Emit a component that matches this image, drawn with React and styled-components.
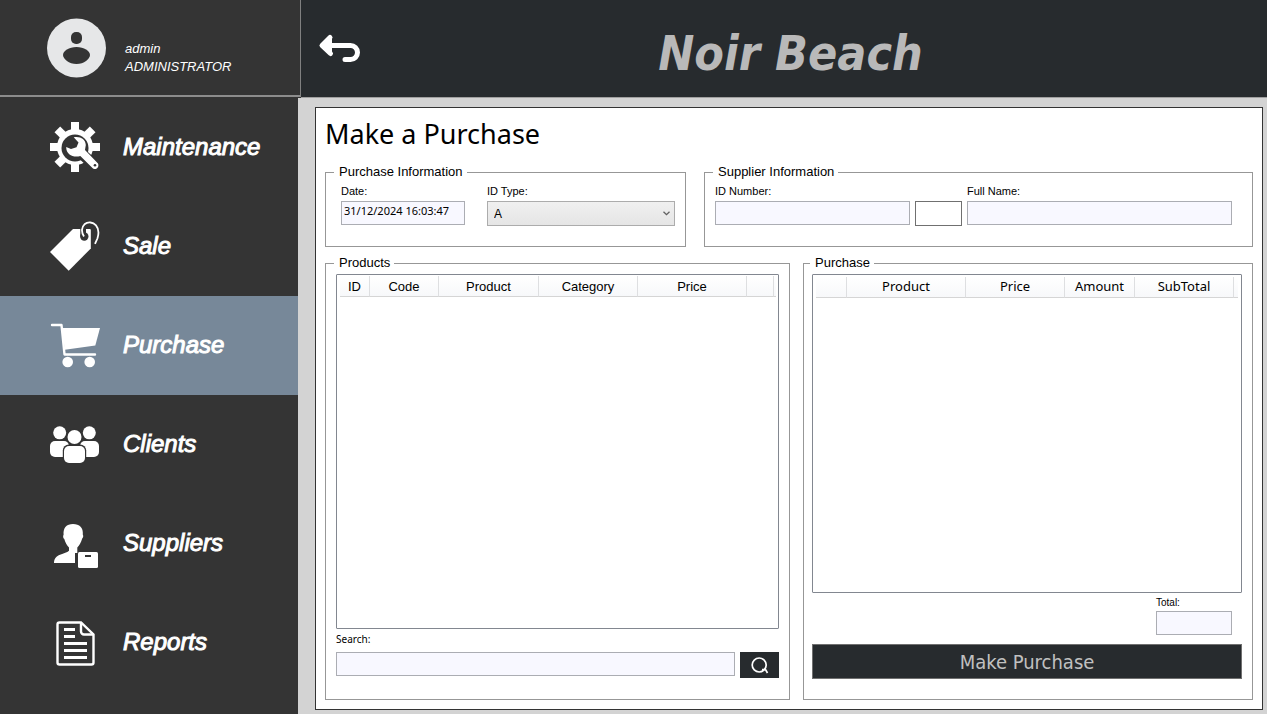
import React from "react";
import styled, { createGlobalStyle } from "styled-components";

const GlobalStyle = createGlobalStyle`
  *, *::before, *::after { box-sizing: border-box; }
  body {
    margin: 0;
    background: #d3d3d3;
    color: #000;
    font-family: "Liberation Sans", Arial, sans-serif;
    font-size: 13px;
  }
  button, input, select { font: inherit; color: inherit; margin: 0; }
`;

const humanist = `"Noto Sans", "Segoe UI", sans-serif`;
const condensed = `"DejaVu Sans Condensed", Tahoma, sans-serif`;

const Page = styled.div`
  min-height: 100vh;
  display: flex;
  flex-direction: column;
`;

const TopBar = styled.header`
  display: flex;
  height: 98px;
  background: #343434;
`;

const UserPanel = styled.div`
  width: 301px;
  height: 97px;
  padding: 0 0 0 46px;
  display: flex;
  align-items: center;
  gap: 19px;
  color: #fff;
  border-right: 1px solid #808080;
  border-bottom: 2px solid #8c8c8c;
`;

const UserText = styled.div`
  padding-top: 21px;
  font-style: italic;
  font-size: 13px;
  line-height: 18px;
`;

const Banner = styled.div`
  flex: 1;
  display: flex;
  align-items: center;
  padding: 0 48px 0 17px;
  background: #272b2e;
  border-bottom: 1px solid #a0a0a0;
`;

const BackButton = styled.button`
  width: 44px;
  height: 34px;
  padding: 0;
  border: 0;
  background: none;
  svg { display: block; }
`;

const Brand = styled.div`
  flex: 1;
  padding-top: 8px;
  text-align: center;
  color: #b9b9b9;
  font-family: ${condensed};
  font-size: 48px;
  line-height: 56px;
  font-weight: bold;
  font-style: italic;
`;

const Body = styled.div`
  flex: 1;
  display: grid;
  grid-template-columns: 298px minmax(0, 1fr);
`;

const Sidebar = styled.nav`
  background: #343434;
`;

const NavLink = styled.a`
  display: flex;
  align-items: center;
  gap: 23px;
  height: 99px;
  padding: 0 0 0 50px;
  color: #fff;
  text-decoration: none;
  font-size: 24px;
  font-style: italic;
  line-height: 28px;
  -webkit-text-stroke: 1px #fff;
  background: ${(p) => (p.$active ? "#778899" : "transparent")};
  svg { flex: none; color: ${(p) => (p.$active ? "#778899" : "#343434")}; }
  span { padding-bottom: 1px; }
`;

const Main = styled.main`
  display: flex;
  padding: 9px 4px 4px 17px;
`;

const Card = styled.section`
  flex: 1;
  display: flex;
  flex-direction: column;
  min-width: 0;
  padding: 8px 9px 9px 9px;
  background: #fff;
  border: 1px solid #333;
`;

const Title = styled.h1`
  margin: 0 0 12px;
  font-family: ${humanist};
  font-size: 27px;
  font-weight: normal;
  line-height: 36px;
`;

const Columns = styled.div`
  display: grid;
  grid-template-columns: ${(p) => p.$columns};
  gap: ${(p) => p.$gap};
  ${(p) => p.$fill && "flex: 1;"}
  & + & { margin-top: 8px; }
`;

const Group = styled.fieldset`
  display: flex;
  flex-direction: column;
  min-width: 0;
  min-height: 83px;
  margin: 0;
  padding: 3px 10px ${(p) => p.$bottom || "20px"} ${(p) => p.$left || "10px"};
  border: 1px solid #979797;
`;

const Legend = styled.legend`
  margin-left: -2px;
  padding: 0 4px 0 5px;
  font-size: 13px;
  line-height: 16px;
`;

const FieldRow = styled.div`
  display: grid;
  grid-template-columns: ${(p) => p.$columns};
  column-gap: ${(p) => p.$gap};
  align-items: start;
  padding: ${(p) => p.$pad || "0"};
`;

const Field = styled.div`
  display: flex;
  flex-direction: column;
  gap: 2px;
  min-width: 0;
`;

const Label = styled.label`
  font-size: 11px;
  line-height: 16px;
`;

const SmallLabel = styled(Label)`
  font-family: ${(p) => (p.$humanist ? humanist : "inherit")};
  font-size: 10px;
`;

const TextBox = styled.input`
  width: 100%;
  min-width: 0;
  height: 24px;
  padding: 0 3px 6px 2px;
  border: 1px solid #abadb3;
  border-radius: 0;
  background: #f8f8ff;
  font-family: ${humanist};
  font-size: 11px;
`;

const SelectWrap = styled.div`
  position: relative;
  svg { position: absolute; right: 5px; top: 10px; pointer-events: none; }
`;

const Select = styled.select`
  display: block;
  width: 100%;
  height: 25px;
  padding: 0 20px 0 6px;
  appearance: none;
  border: 1px solid #acacac;
  border-radius: 0;
  background: linear-gradient(#f0f0f0, #e5e5e5);
  font-size: 12px;
`;

const PlainButton = styled.button`
  align-self: end;
  height: 25px;
  margin-bottom: -1px;
  padding: 0;
  border: 1px solid #707070;
  background: #fff;
`;

const SearchField = styled.div`
  display: flex;
  flex-direction: column;
  margin-top: 2px;
`;

const SearchRow = styled.div`
  display: flex;
  gap: 5px;
  margin-top: 5px;
`;

const SearchButton = styled.button`
  flex: none;
  width: 39px;
  height: 26px;
  padding: 0;
  display: grid;
  place-items: center;
  border: 0;
  background: #272b2e;
`;

const TableBox = styled.div`
  flex: 1;
  padding: ${(p) => p.$pad};
  border: 1px solid #828790;
  border-radius: 1px;
  overflow: hidden;
`;

const Table = styled.table`
  width: 100%;
  table-layout: fixed;
  border-collapse: separate;
  border-spacing: 0;
  th {
    height: 21px;
    padding: ${(p) => (p.$humanist ? "0 0 2px" : "2px 0 0")};
    font-family: ${(p) => (p.$humanist ? humanist : "inherit")};
    font-size: 13px;
    font-weight: normal;
    line-height: 18px;
    white-space: nowrap;
    text-align: center;
    border-right: 1px solid #dedfe1;
    border-bottom: 1px solid #d5d5d5;
    background: linear-gradient(#fff, #f7f8fa);
  }
  th:last-child { border-right: 0; }
`;

const TotalField = styled.div`
  display: flex;
  flex-direction: column;
  align-self: flex-end;
  width: 76px;
  margin: 2px 10px 9px 0;
`;

const SubmitButton = styled.button`
  height: 35px;
  padding: 0;
  border: 1px solid #707070;
  background: #272b2e;
  color: #c0c0c0;
  font-family: ${condensed};
  font-size: 20px;
`;

const Icon = ({ children }) => (
  <svg width="50" height="51" viewBox="0 0 50 51" fill="#fff" aria-hidden="true">
    {children}
  </svg>
);

const MaintenanceIcon = () => (
  <Icon>
    <circle cx="25" cy="25" r="18" />
    {[0, 45, 90, 135, 180, 225, 270, 315].map((a) => (
      <path key={a} d="M21 0h8v9h-8z" transform={`rotate(${a} 25 25)`} />
    ))}
    <circle cx="25" cy="26" r="13.500" fill="currentColor" />
    <path d="M31 31 45 44" stroke="currentColor" strokeWidth="11" strokeLinecap="round" />
    <path d="M23.700 15.300C30 14 35.500 17 35.800 23L35 28 48 41.500C49.500 45 46.500 48.500 43 46.500L30.300 34C24 36 16 33 16.200 25L21 27l5.500-1.700 2-4.800z" />
    <circle cx="45" cy="43.300" r="1.300" fill="currentColor" />
  </Icon>
);

const SaleIcon = () => (
  <Icon>
    <path d="M0 31 18.700 49.700 40.800 27.500V9a1 1 0 0 0-1-1H23z" />
    <circle cx="34.300" cy="15.500" r="4.200" fill="currentColor" />
    <path d="M30.300 7h5.700v8h-5.700z" fill="currentColor" />
    <path d="M34 15.500C31 11 31.500 6 34.500 3.300 38 .500 43 1 46 4.300c2.500 3 3 8 1.500 13l-2.500 5.500" fill="none" stroke="#fff" strokeWidth="1.800" />
  </Icon>
);

const PurchaseIcon = () => (
  <Icon>
    <path d="M2 5h9.500l3 29.500H45" fill="none" stroke="#fff" strokeWidth="2.400" strokeLinejoin="round" strokeLinecap="round" />
    <path d="M12 8h38l-4.700 17.500-30.500 4.300z" />
    <circle cx="17.700" cy="42" r="5.300" />
    <circle cx="39.700" cy="42" r="5.300" />
  </Icon>
);

const ClientsIcon = () => (
  <Icon>
    <circle cx="9.700" cy="13.800" r="6.500" />
    <circle cx="39.300" cy="13.800" r="6.500" />
    <rect x="0" y="22" width="19" height="16" rx="5" />
    <rect x="30" y="22" width="19" height="16" rx="5" />
    <circle cx="24.500" cy="18" r="8.300" fill="currentColor" />
    <rect x="12.800" y="25.500" width="23.400" height="20" rx="6" fill="currentColor" />
    <circle cx="24.500" cy="18" r="7" />
    <rect x="14" y="27" width="21" height="17" rx="5" />
  </Icon>
);

const SuppliersIcon = () => (
  <Icon>
    <path d="M23 6c6.500 0 10.500 4 9.800 10.500.9 1.500.3 3.200-.600 4-1.200 4.500-3.200 7-4.900 9v5.500H25V45H4c0-4.500 2.500-7 6-8.300 4-1.500 7-2.200 9-4v-3.200c-2.200-2.200-3.700-4.800-4.700-8.500-1.300-1-1.500-3-.7-4.300C13 10 16.500 6 23 6z" />
    <rect x="28" y="34" width="20" height="16" rx="1.500" />
    <path d="M35 37h6v2h-6z" fill="currentColor" />
  </Icon>
);

const ReportsIcon = () => (
  <Icon>
    <path d="M9.500 5.500H31L43.500 17.500v28a2 2 0 0 1-2 2h-32a2 2 0 0 1-2-2v-38a2 2 0 0 1 2-2z" fill="none" stroke="#fff" strokeWidth="2.400" />
    <path d="M31 5.500v9a3 3 0 0 0 3 3h9.500" fill="none" stroke="#fff" strokeWidth="2.400" />
    <path d="M14 12.500h11M14 19.500h11M14 26.500h23M14 33.500h23M14 40.500h23" stroke="#fff" strokeWidth="3" />
  </Icon>
);

const AvatarIcon = () => (
  <svg width="60" height="60" viewBox="0 0 60 60" aria-hidden="true">
    <circle cx="30.500" cy="30" r="29.500" fill="#e6e7e8" />
    <rect x="25" y="14" width="11" height="12" rx="5" fill="#343434" />
    <path d="M17 37c0-4 6-8 13.500-8S44 33 44 37s-6 9-13.500 9S17 41 17 37z" fill="#343434" />
  </svg>
);

const BackIcon = () => (
  <svg width="44" height="34" viewBox="0 0 44 34" fill="none" stroke="#fff" strokeWidth="5" strokeLinecap="round" strokeLinejoin="round" aria-hidden="true">
    <path d="M13 5 4 13.500l9 8z" fill="#fff" strokeWidth="2" />
    <path d="M12 5.500 4 13.500l8.500 8M6 13.500h26.500a7 7 0 0 1 0 14H27" />
  </svg>
);

const SearchIcon = () => (
  <svg width="20" height="20" viewBox="0 0 20 20" fill="none" stroke="#fff" strokeWidth="1.700" aria-hidden="true">
    <circle cx="9.200" cy="10" r="7" />
    <path d="M12 14.500h3.500l2 3.500" />
  </svg>
);

const navItems = [
  { name: "Maintenance", Glyph: MaintenanceIcon },
  { name: "Sale", Glyph: SaleIcon },
  { name: "Purchase", Glyph: PurchaseIcon, active: true },
  { name: "Clients", Glyph: ClientsIcon },
  { name: "Suppliers", Glyph: SuppliersIcon },
  { name: "Reports", Glyph: ReportsIcon },
];

const productColumns = [
  ["ID", 30], ["Code", 69], ["Product", 100], ["Category", 99], ["Price", 109], ["", 27], ["", 2],
];
const purchaseColumns = [
  ["", 31], ["Product", 119], ["Price", 99], ["Amount", 70], ["SubTotal", 99], ["", 4],
];

const HeaderTable = ({ columns, label, humanist: isHumanist }) => {
  const total = columns.reduce((sum, [, w]) => sum + w, 0);
  return (
    <Table $humanist={isHumanist} aria-label={label}>
      <colgroup>
        {columns.map(([, w], i) => (
          <col key={i} style={{ width: `${(w / total) * 100}%` }} />
        ))}
      </colgroup>
      <thead>
        <tr>
          {columns.map(([name], i) => (
            <th key={i} scope="col">{name}</th>
          ))}
        </tr>
      </thead>
    </Table>
  );
};

export default function App() {
  return (
    <>
      <GlobalStyle />
      <Page>
        <TopBar>
          <UserPanel>
            <AvatarIcon />
            <UserText>
              <div>admin</div>
              <div>ADMINISTRATOR</div>
            </UserText>
          </UserPanel>
          <Banner>
            <BackButton type="button" aria-label="Back"><BackIcon /></BackButton>
            <Brand>Noir Beach</Brand>
          </Banner>
        </TopBar>
        <Body>
          <Sidebar>
            {navItems.map(({ name, Glyph, active }) => (
              <NavLink key={name} href="#" $active={active} aria-current={active ? "page" : undefined}>
                <Glyph />
                <span>{name}</span>
              </NavLink>
            ))}
          </Sidebar>
          <Main>
            <Card>
              <Title>Make a Purchase</Title>
              <Columns $columns="minmax(0, 361fr) minmax(0, 549fr)" $gap="18px">
                <Group>
                  <Legend>Purchase Information</Legend>
                  <FieldRow $columns="124fr 188fr" $gap="22px" $pad="0 0 0 5px">
                    <Field>
                      <Label htmlFor="date">Date:</Label>
                      <TextBox id="date" defaultValue="31/12/2024 16:03:47" />
                    </Field>
                    <Field>
                      <Label htmlFor="id-type">ID Type:</Label>
                      <SelectWrap>
                        <Select id="id-type" defaultValue="A">
                          <option>A</option>
                        </Select>
                        <svg width="7" height="5" viewBox="0 0 7 5" fill="none" stroke="#606060" strokeWidth="1.300" aria-hidden="true">
                          <path d="M.5.700 3.500 3.700 6.500.700" />
                        </svg>
                      </SelectWrap>
                    </Field>
                  </FieldRow>
                </Group>
                <Group>
                  <Legend>Supplier Information</Legend>
                  <FieldRow $columns="195fr 47px 265fr" $gap="5px" $pad="0 10px 0 0">
                    <Field>
                      <Label htmlFor="id-number">ID Number:</Label>
                      <TextBox id="id-number" />
                    </Field>
                    <PlainButton type="button" aria-label="Find supplier" />
                    <Field>
                      <Label htmlFor="full-name">Full Name:</Label>
                      <TextBox id="full-name" />
                    </Field>
                  </FieldRow>
                </Group>
              </Columns>
              <Columns $columns="minmax(0, 465fr) minmax(0, 450fr)" $gap="13px" $fill>
                <Group $bottom="21px">
                  <Legend>Products</Legend>
                  <TableBox $pad="1px 2px 0 3px">
                    <HeaderTable columns={productColumns} label="Products" />
                  </TableBox>
                  <SearchField>
                    <SmallLabel $humanist htmlFor="search">Search:</SmallLabel>
                    <SearchRow>
                      <TextBox id="search" />
                      <SearchButton type="button" aria-label="Search"><SearchIcon /></SearchButton>
                    </SearchRow>
                  </SearchField>
                </Group>
                <Group $left="8px">
                  <Legend>Purchase</Legend>
                  <TableBox $pad="2px 3px">
                    <HeaderTable columns={purchaseColumns} label="Purchase" humanist />
                  </TableBox>
                  <TotalField>
                    <SmallLabel htmlFor="total">Total:</SmallLabel>
                    <TextBox id="total" />
                  </TotalField>
                  <SubmitButton type="button">Make Purchase</SubmitButton>
                </Group>
              </Columns>
            </Card>
          </Main>
        </Body>
      </Page>
    </>
  );
}
